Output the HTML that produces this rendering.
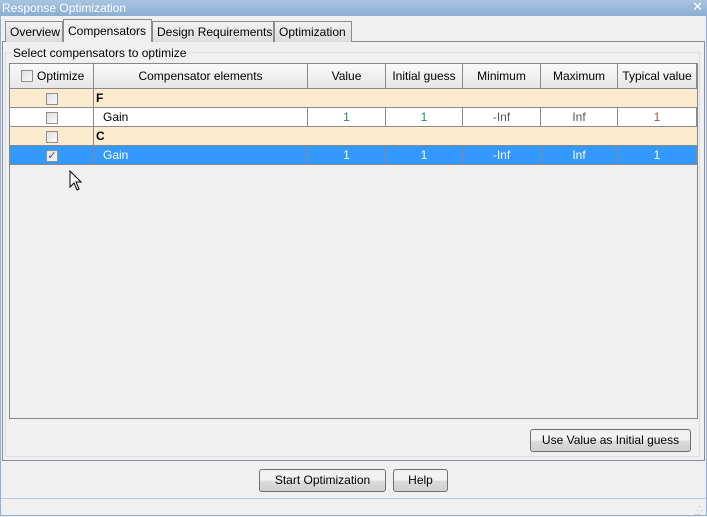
<!DOCTYPE html>
<html><head><style>
*{margin:0;padding:0;box-sizing:border-box}
body{width:707px;height:516px;background:#f0f0f0;font-family:"Liberation Sans",sans-serif;font-size:12px;color:#000;position:relative;overflow:hidden}
.abs{position:absolute}
#win{left:0;top:0;width:707px;height:516px;border:1px solid #8fb1d3;border-top:none}
#title{left:0;top:0;width:707px;height:16px;background:linear-gradient(#a9c4e0,#8aaed2);color:#fff;font-size:12px;padding:1px 0 0 2px;line-height:14px}
.tab{top:21px;height:21px;border:1px solid #898c95;border-bottom:none;background:linear-gradient(#f2f2f2,#dcdcdc);padding:3px 4px 0;font-size:12px;white-space:nowrap}
#panel{left:2px;top:41px;width:703px;height:420px;border:1px solid #898c95;background:#f0f0f0}
#grp{left:5px;top:52px;width:695px;height:405px;border:1px solid #d5dfe5;border-radius:2px}
#tbl{left:9px;top:63px;width:689px;height:356px;border:1px solid #828790;background:#f0f0f0}
.h{top:0;height:25px;border-right:1px solid #8a8a8a;border-bottom:1px solid #8a8a8a;background:linear-gradient(#fafafa,#e6e6e6);text-align:center;line-height:24px}
.c{height:19px;border-right:1px solid #8a8a8a;border-bottom:1px solid #8a8a8a;text-align:center;line-height:18px;color:#555}
.cb{width:12px;height:12px;border:1px solid #8e8f8f;background:linear-gradient(135deg,#e0e0e0,#fafafa)}
.btn{border:1px solid #707070;border-radius:3px;background:linear-gradient(#f2f2f2 50%,#dddddd 50%,#cfcfcf);text-align:center;line-height:20px;font-size:12px}
</style></head><body>
<div id="win" class="abs"></div>
<div id="title" class="abs">Response Optimization<span style="position:absolute;right:4px;top:0;font-size:13px">✕</span></div>
<div id="panel" class="abs"></div>
<div class="tab abs" style="left:5px;width:58px">Overview</div>
<div class="tab abs" style="left:63px;top:19px;height:23px;width:89px;background:#f0f0f0;padding-top:4px">Compensators</div>
<div class="tab abs" style="left:152px;width:122px">Design Requirements</div>
<div class="tab abs" style="left:274px;width:78px">Optimization</div>
<div id="grp" class="abs"></div>
<div class="abs" style="left:11px;top:46px;background:#f0f0f0;padding:0 2px">Select compensators to optimize</div>
<div id="tbl" class="abs">
 <div class="h abs" style="left:0;width:84px;text-align:left;padding-left:27px">Optimize<div class="cb abs" style="left:11px;top:6px"></div></div>
 <div class="h abs" style="left:84px;width:214px">Compensator elements</div>
 <div class="h abs" style="left:298px;width:78px">Value</div>
 <div class="h abs" style="left:376px;width:77px">Initial guess</div>
 <div class="h abs" style="left:453px;width:78px">Minimum</div>
 <div class="h abs" style="left:531px;width:77px">Maximum</div>
 <div class="h abs" style="left:608px;width:79px">Typical value</div>
 <!-- row F -->
 <div class="abs" style="left:0;top:25px;width:687px;height:19px;background:#fdebd0;border-bottom:1px solid #8a8a8a"></div>
 <div class="abs" style="left:83px;top:25px;width:1px;height:19px;background:#8a8a8a"></div>
 <div class="abs" style="left:86px;top:26px;font-weight:bold;line-height:17px">F</div>
 <div class="cb abs" style="left:36px;top:29px"></div>
 <!-- row Gain -->
 <div class="abs" style="left:0;top:44px;width:687px;height:19px;background:#fff"></div>
 <div class="c abs" style="left:0;top:44px;width:84px;color:#000"></div>
 <div class="cb abs" style="left:36px;top:48px"></div>
 <div class="c abs" style="left:84px;top:44px;width:214px;text-align:left;padding-left:9px;color:#000">Gain</div>
 <div class="c abs" style="left:298px;top:44px;width:78px;color:#2d7f78">1</div>
 <div class="c abs" style="left:376px;top:44px;width:77px;color:#2d7f78">1</div>
 <div class="c abs" style="left:453px;top:44px;width:78px">-Inf</div>
 <div class="c abs" style="left:531px;top:44px;width:77px">Inf</div>
 <div class="c abs" style="left:608px;top:44px;width:79px;color:#a0504a">1</div>
 <!-- row C -->
 <div class="abs" style="left:0;top:63px;width:687px;height:19px;background:#fdebd0;border-bottom:1px solid #8a8a8a"></div>
 <div class="abs" style="left:83px;top:63px;width:1px;height:19px;background:#8a8a8a"></div>
 <div class="abs" style="left:86px;top:64px;font-weight:bold;line-height:17px">C</div>
 <div class="cb abs" style="left:36px;top:67px"></div>
 <!-- selected -->
 <div class="abs" style="left:0;top:82px;width:687px;height:19px;background:#3399ff"></div>
 <div class="c abs" style="left:0;top:82px;width:84px"></div>
 <div class="cb abs" style="left:36px;top:86px;color:#2a4fa0;font-size:11px;line-height:10px;text-align:center">✓</div>
 <div class="c abs" style="left:84px;top:82px;width:214px;text-align:left;padding-left:9px;color:#fff">Gain</div>
 <div class="c abs" style="left:298px;top:82px;width:78px;color:#fff">1</div>
 <div class="c abs" style="left:376px;top:82px;width:77px;color:#fff">1</div>
 <div class="c abs" style="left:453px;top:82px;width:78px;color:#fff">-Inf</div>
 <div class="c abs" style="left:531px;top:82px;width:77px;color:#fff">Inf</div>
 <div class="c abs" style="left:608px;top:82px;width:79px;color:#fff">1</div>
</div>
<svg class="abs" style="left:69px;top:170px" width="14" height="22"><path d="M1 1 L1 17 L5 13 L8 20 L10 19 L7 12 L12 12 Z" fill="#fff" stroke="#000" stroke-width="1"/></svg>
<div class="btn abs" style="left:530px;top:429px;width:161px;height:23px">Use Value as Initial guess</div>
<div class="btn abs" style="left:259px;top:469px;width:127px;height:23px">Start Optimization</div>
<div class="btn abs" style="left:393px;top:469px;width:55px;height:23px">Help</div>
<div class="abs" style="left:1px;top:498px;width:705px;height:1px;background:#b9cde0"></div>
<div class="abs" style="left:694px;top:503px;color:#999;font-size:8px;line-height:4px">&nbsp;&nbsp;.<br>&nbsp;.&nbsp;.<br>...</div>
</body></html>
